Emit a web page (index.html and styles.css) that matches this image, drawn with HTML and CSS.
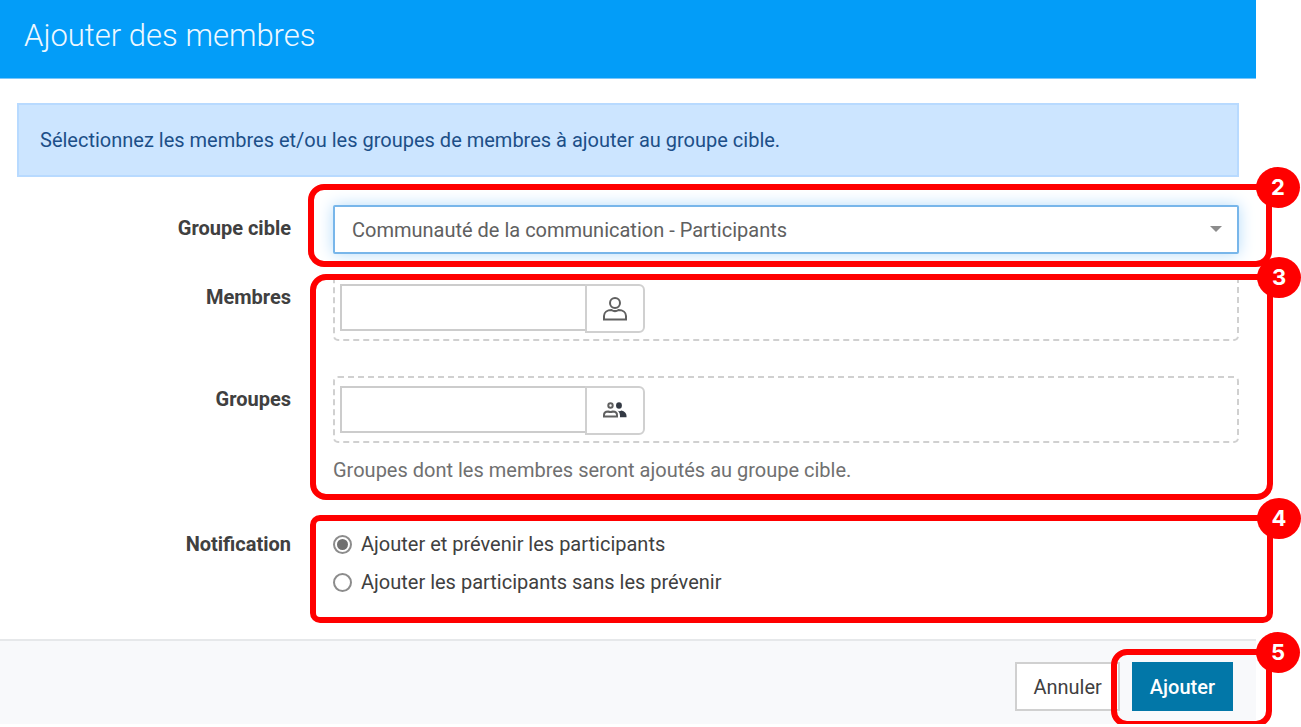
FILE: index.html
```html
<!DOCTYPE html>
<html lang="fr">
<head>
<meta charset="utf-8">
<title>Ajouter des membres</title>
<link rel="stylesheet" href="styles.css">
</head>
<body>
<form class="dialog">
  <header class="dialog-header">
    <h1 class="dialog-title">Ajouter des membres</h1>
  </header>

  <div class="dialog-body">
    <p class="alert">Sélectionnez les membres et/ou les groupes de membres à ajouter au groupe cible.</p>

    <section class="step step-target">
      <div class="row">
        <label class="label" for="target">Groupe cible</label>
        <div class="select-wrap">
          <select class="select" id="target">
            <option>Communauté de la communication - Participants</option>
          </select>
        </div>
      </div>
      <div class="callout"><span class="badge">2</span></div>
    </section>

    <section class="step step-people">
      <div class="row">
        <label class="label" for="members">Membres</label>
        <div class="dropzone">
          <input class="picker-input" id="members" type="text">
          <button class="picker-button" type="button" aria-label="Choisir des membres">
            <svg width="24" height="24" viewBox="0 0 24 24" fill="none" stroke="#606060" stroke-width="2">
              <circle cx="12" cy="6" r="5"/>
              <path d="M8.500 13C4 13 1 15.500 1 19v3.500h22V19c0-3.500-3-6-7.500-6-2 1.300-5 1.300-7 0z"/>
            </svg>
          </button>
        </div>
      </div>
      <div class="row">
        <label class="label" for="groups">Groupes</label>
        <div>
          <div class="dropzone">
            <input class="picker-input" id="groups" type="text">
            <button class="picker-button" type="button" aria-label="Choisir des groupes">
              <svg width="24" height="24" viewBox="0 0 24 24" fill="none" stroke="#606060" stroke-width="2">
                <circle cx="7.500" cy="6.500" r="2.200"/>
                <path d="M5 12.500c-2.500 0-4 1.500-4 3.500v1.500h13V16c0-2-1.500-3.500-4-3.500-1.500.7-3.500.7-5 0z"/>
                <g fill="#343a44" stroke="none">
                  <ellipse cx="16" cy="6.500" rx="2.900" ry="3.300"/>
                  <path d="M14.500 11.500c1.500 1 2.500.8 4 0 3 .5 5 2.800 5 5.300v1.400H17c.3-3-.6-5-2.500-6.700z"/>
                </g>
              </svg>
            </button>
          </div>
          <p class="help">Groupes dont les membres seront ajoutés au groupe cible.</p>
        </div>
      </div>
      <div class="callout"><span class="badge">3</span></div>
    </section>

    <section class="step step-notify">
      <div class="row" role="radiogroup" aria-labelledby="notify-label">
        <span class="label" id="notify-label">Notification</span>
        <div class="options">
          <label class="option"><input class="radio" type="radio" name="notify" checked>Ajouter et prévenir les participants</label>
          <label class="option"><input class="radio" type="radio" name="notify">Ajouter les participants sans les prévenir</label>
        </div>
      </div>
      <div class="callout"><span class="badge">4</span></div>
    </section>
  </div>

  <footer class="dialog-footer">
    <button class="button" type="button">Annuler</button>
    <div class="step step-submit">
      <button class="button button-primary" type="submit">Ajouter</button>
      <div class="callout"><span class="badge">5</span></div>
    </div>
  </footer>
</form>
</body>
</html>
```
FILE: styles.css
```css
* {
  box-sizing: border-box;
}

body {
  margin: 0;
  background: #fff;
  color: #404040;
  font: 20px/24px Roboto, "Liberation Sans", sans-serif;
}

h1,
p {
  margin: 0;
}

input,
select,
button {
  margin: 0;
  color: inherit;
  font: inherit;
}

.dialog {
  margin-right: 45px;
}

.dialog-header {
  padding: 16px 24px 22px;
  border-bottom: 1px solid #7ac6fa;
  background: #039df8;
}

.dialog-title {
  color: #eef8ff;
  font-size: 31px;
  font-weight: 300;
  line-height: 40px;
}

.dialog-body {
  padding: 24px 17px 17px;
}

.alert {
  padding: 23px 21px;
  border: 2px solid #b8daff;
  background: #cce5ff;
  color: #1c4f88;
}

.step {
  position: relative;
}

.row {
  display: grid;
  grid-template-columns: 274px 1fr;
  column-gap: 42px;
}

.label {
  padding-top: 11px;
  font-weight: 700;
  text-align: right;
}

.step-target {
  margin-top: 28px;
}

.select-wrap {
  position: relative;
}

.select-wrap::after {
  content: "";
  position: absolute;
  top: 21px;
  right: 17px;
  border: 6px solid transparent;
  border-top-color: #8c8c8c;
  border-bottom: 0;
  pointer-events: none;
}

.select {
  display: block;
  width: 100%;
  height: 49px;
  padding: 0 40px 0 17px;
  appearance: none;
  border: 2px solid #78b6ea;
  border-radius: 2px;
  outline: 0;
  background: #fff;
  box-shadow: 0 0 16px #b5dcfa;
  color: #606060;
}

.step-people {
  display: grid;
  row-gap: 35px;
  margin-top: 20px;
}

.dropzone {
  display: flex;
  height: 67px;
  padding: 8px 5px;
  border: 2px dashed #d0d0d0;
  border-radius: 5px;
}

.picker-input {
  width: 247px;
  height: 47px;
  padding: 0 12px;
  border: 2px solid #ccc;
  background: #fff;
}

.picker-button {
  display: grid;
  place-items: center;
  width: 60px;
  height: 49px;
  margin-left: -2px;
  padding: 0;
  border: 2px solid #d0d0d0;
  border-radius: 0 6px 6px 0;
  background: #fff;
}

.help {
  margin-top: 15px;
  color: #707070;
}

.step-notify {
  margin-top: 39px;
}

.options {
  display: grid;
  row-gap: 14px;
  padding-top: 11px;
}

.option {
  display: flex;
  align-items: center;
  gap: 9px;
}

.radio {
  width: 19px;
  height: 19px;
  appearance: none;
  border: 2px solid #8c8c8c;
  border-radius: 50%;
  background: #fff;
}

.radio:checked {
  padding: 2px;
  background: #707070 content-box;
}

.dialog-footer {
  display: flex;
  justify-content: flex-end;
  gap: 12px;
  margin-top: 28px;
  padding: 21px 23px 13px;
  border-top: 2px solid #e6e8ea;
  background: #f8f9fb;
}

.button {
  display: block;
  height: 49px;
  padding: 0 16px;
  border: 2px solid #d0d0d0;
  background: #fff;
}

.button-primary {
  border-color: #0277a8;
  background: #0277a8;
  color: #fff;
  font-weight: 500;
}

.callout {
  position: absolute;
  top: -21px;
  right: -34px;
  bottom: -13px;
  left: 293px;
  border: 6px solid #f00;
  border-radius: 16px;
  pointer-events: none;
}

.step-target .callout {
  right: -33px;
  left: 291px;
}

.step-people .callout {
  top: 0;
  bottom: -18px;
}

.step-notify .callout {
  top: -6px;
  bottom: -29px;
  border-radius: 10px;
}

.step-submit .callout {
  top: -13px;
  right: -39px;
  bottom: -16px;
  left: -21px;
}

.badge {
  position: absolute;
  top: -23px;
  right: -34px;
  width: 44px;
  height: 41px;
  border-radius: 50%;
  background: #f00;
  color: #fff;
  font: 700 22px/41px Inter, "Liberation Sans", sans-serif;
  text-align: center;
}
```
